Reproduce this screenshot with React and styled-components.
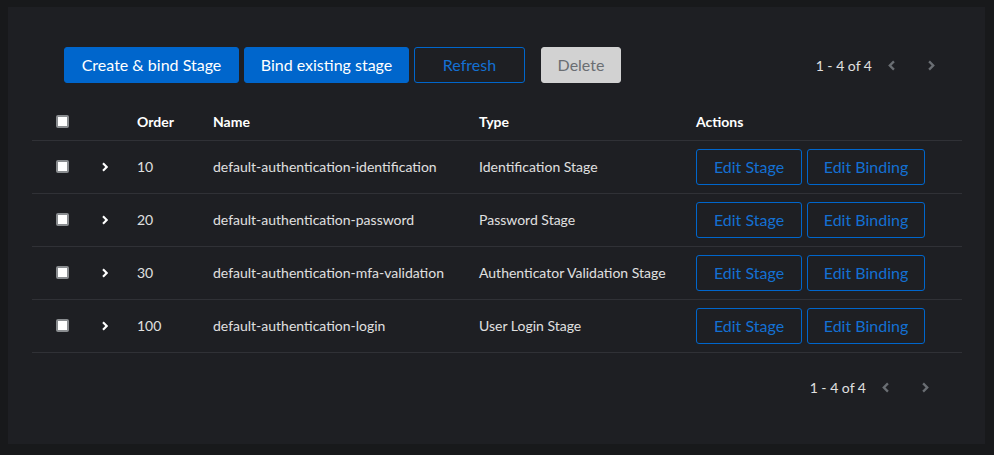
import React from "react";
import styled, { createGlobalStyle } from "styled-components";

const GlobalStyle = createGlobalStyle`
  body {
    margin: 0;
    background: #18191b;
    font-family: Lato, "Liberation Sans", sans-serif;
    color: #e0e0e0;
  }
`;

const Page = styled.div`
  padding: 7px 9px 0 8px;
`;

const Card = styled.div`
  height: 437px;
  background: #1e1f23;
  padding: 0 23px 0 24px;
  box-sizing: border-box;
`;

const Toolbar = styled.div`
  display: flex;
  align-items: center;
  padding: 40px 10px 0 32px;
  margin-bottom: 21px;
`;

const ButtonGroup = styled.div`
  display: flex;
  gap: 5px;
  align-items: center;
`;

const Button = styled.button`
  height: 36px;
  box-sizing: border-box;
  padding: 0 16.5px 1px;
  font-family: inherit;
  font-size: 16px;
  border-radius: 3px;
  cursor: pointer;
  border: 1px solid transparent;
  background: transparent;
  color: #fff;
  white-space: nowrap;
  ${(p) =>
    p.$variant === "primary" &&
    `
    background: #0066cc;
    border-color: #0066cc;
    color: #fff;
  `}
  ${(p) =>
    p.$variant === "secondary" &&
    `
    border-color: #0066cc;
    color: #1470d2;
  `}
  ${(p) =>
    p.$variant === "disabled" &&
    `
    background: #d2d2d2;
    border-color: #d2d2d2;
    color: #6a6e73;
    margin-left: 11px;
    cursor: default;
  `}
  ${(p) => p.$width && `width: ${p.$width}px; padding: 0 0 1px;`}
`;

const Pagination = styled.div`
  margin-left: auto;
  display: flex;
  align-items: center;
  font-size: 14px;
  color: #e0e0e0;
  margin-right: ${(p) => p.$right || 0}px;
`;

const NavButton = styled.button`
  width: 40px;
  height: 36px;
  display: flex;
  align-items: center;
  justify-content: center;
  background: transparent;
  border: none;
  color: #6a6e73;
  padding: 0;
`;

const Table = styled.div`
  display: flex;
  flex-direction: column;
`;

const Row = styled.div`
  display: grid;
  grid-template-columns: 45px 35px 76px 266px 217px 1fr;
  align-items: center;
  padding-left: 25px;
  padding-bottom: 1px;
  height: ${(p) => (p.$head ? 37 : 53)}px;
  box-sizing: border-box;
  border-bottom: 1px solid #303136;
  font-size: 14px;
  color: ${(p) => (p.$head ? "#fff" : "#e0e0e0")};
  font-weight: ${(p) => (p.$head ? 700 : 400)};
  white-space: nowrap;
`;

const Checkbox = styled.span`
  display: block;
  width: 13px;
  height: 13px;
  box-sizing: border-box;
  background: #fff;
  border: 2px solid #8a8d90;
  border-radius: 2px;
  margin-left: -1px;
`;

const Actions = styled.div`
  display: flex;
  gap: 5px;
`;

const Footer = styled.div`
  display: flex;
  margin-top: 16px;
`;

const Chevron = ({ dir = "right", color = "currentColor", size = 11 }) => (
  <svg width={size * 0.64} height={size} viewBox="0 0 256 400" style={{ display: "block" }}>
    <path
      d={
        dir === "right"
          ? "M70 20 L250 200 L70 380 L10 320 L130 200 L10 80 Z"
          : "M186 20 L6 200 L186 380 L246 320 L126 200 L246 80 Z"
      }
      fill={color}
    />
  </svg>
);

const rows = [
  ["10", "default-authentication-identification", "Identification Stage"],
  ["20", "default-authentication-password", "Password Stage"],
  ["30", "default-authentication-mfa-validation", "Authenticator Validation Stage"],
  ["100", "default-authentication-login", "User Login Stage"],
];

const Pager = ({ right }) => (
  <Pagination $right={right}>
    <span>1 - 4 of 4</span>
    <NavButton>
      <Chevron dir="left" />
    </NavButton>
    <NavButton>
      <Chevron dir="right" />
    </NavButton>
  </Pagination>
);

export default function App() {
  return (
    <>
      <GlobalStyle />
      <Page>
        <Card>
          <Toolbar>
            <ButtonGroup>
              <Button $variant="primary" $width={175}>
                Create &amp; bind Stage
              </Button>
              <Button $variant="primary" $width={165}>
                Bind existing stage
              </Button>
              <Button $variant="secondary" $width={111}>
                Refresh
              </Button>
              <Button $variant="disabled" $width={80}>
                Delete
              </Button>
            </ButtonGroup>
            <Pager />
          </Toolbar>
          <Table>
            <Row $head>
              <Checkbox />
              <span />
              <span>Order</span>
              <span>Name</span>
              <span>Type</span>
              <span>Actions</span>
            </Row>
            {rows.map(([order, name, type]) => (
              <Row key={order}>
                <Checkbox />
                <span>
                  <Chevron color="#fff" size={10} />
                </span>
                <span>{order}</span>
                <span>{name}</span>
                <span>{type}</span>
                <Actions>
                  <Button $variant="secondary" $width={106}>
                    Edit Stage
                  </Button>
                  <Button $variant="secondary" $width={118}>
                    Edit Binding
                  </Button>
                </Actions>
              </Row>
            ))}
          </Table>
          <Footer>
            <Pager right={16} />
          </Footer>
        </Card>
      </Page>
    </>
  );
}
